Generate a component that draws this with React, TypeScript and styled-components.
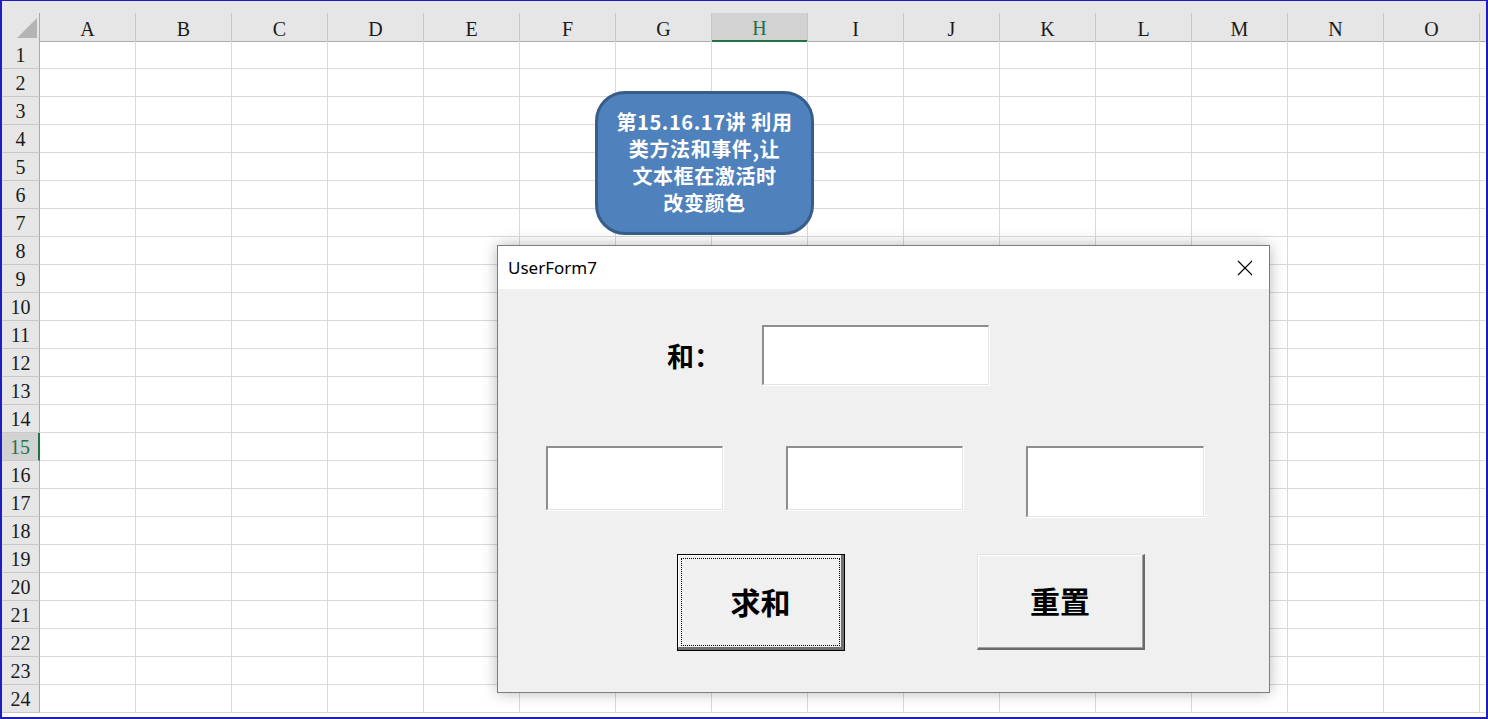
import React from 'react';
import styled, { createGlobalStyle, css } from 'styled-components';

const COLUMNS = ['A', 'B', 'C', 'D', 'E', 'F', 'G', 'H', 'I', 'J', 'K', 'L', 'M', 'N', 'O'];
const ROW_COUNT = 24;
const ACTIVE_COL = 'H';
const ACTIVE_ROW = 15;

const CALLOUT_LINES = ['第15.16.17讲 利用', '类方法和事件,让', '文本框在激活时', '改变颜色'];

const GlobalStyle = createGlobalStyle`
  html, body {
    margin: 0;
    padding: 0;
    background: #fff;
    overflow: hidden;
  }
`;

const Frame = styled.div`
  position: relative;
  width: 1488px;
  height: 719px;
  box-sizing: border-box;
  border: 2px solid #1d1dc0;
  border-top-width: 1px;
  overflow: hidden;
  background: #fff;
`;

const TopStrip = styled.div`
  height: 12px;
  background: #e6e6e6;
`;

const Sheet = styled.div`
  display: grid;
  grid-template-columns: 38px repeat(15, 96px) 1fr;
  grid-auto-rows: 28px;
  font-family: 'Liberation Serif', 'Times New Roman', serif;
  font-size: 20px;
  color: #1a1a1a;
`;

const Corner = styled.div`
  height: 29px;
  box-sizing: border-box;
  background: #e6e6e6;
  border-right: 1px solid #ababab;
  border-bottom: 1px solid #ababab;
  display: flex;
  justify-content: flex-end;
  align-items: flex-end;
  padding: 0 2px 3px 0;

  &::after {
    content: '';
    width: 20px;
    height: 20px;
    background: #b4b4b4;
    clip-path: polygon(100% 0, 100% 100%, 0 100%);
  }
`;

const ColHead = styled.div<{ $active?: boolean; $blank?: boolean }>`
  height: 29px;
  box-sizing: border-box;
  background: #e6e6e6;
  border-right: 1px solid ${(p) => (p.$blank ? '#e6e6e6' : '#c6c6c6')};
  border-bottom: 1px solid #ababab;
  display: flex;
  align-items: center;
  justify-content: center;
  padding-top: 4px;

  ${(p) =>
    p.$active &&
    css`
      background: #d2d2d2;
      color: #217346;
      border-bottom: 2px solid #217346;
    `}
`;

const RowHead = styled.div<{ $active?: boolean }>`
  box-sizing: border-box;
  background: #e6e6e6;
  border-right: 1px solid #ababab;
  border-bottom: 1px solid #c9c9c9;
  display: flex;
  align-items: center;
  justify-content: center;
  padding-top: 2px;

  ${(p) =>
    p.$active &&
    css`
      background: #d2d2d2;
      color: #217346;
      border-right: 2px solid #217346;
    `}
`;

const Cell = styled.div<{ $last?: boolean }>`
  box-sizing: border-box;
  border-right: 1px solid ${(p) => (p.$last ? 'transparent' : '#d9d9d9')};
  border-bottom: 1px solid #d9d9d9;
`;

/* rounded rectangle shape floating on the sheet */
const Callout = styled.div`
  position: absolute;
  left: 593px;
  top: 90px;
  width: 219px;
  height: 144px;
  box-sizing: border-box;
  border: 3px solid #385d8a;
  border-radius: 30px;
  background: #4f81bd;
  display: flex;
  flex-direction: column;
  align-items: center;
  justify-content: center;
  color: #fff;
  font-family: 'Noto Sans CJK SC', 'Noto Sans', sans-serif;
  font-weight: 700;
  font-size: 20px;
  padding-bottom: 2px;
`;

const CalloutLine = styled.span`
  display: block;
  height: 27px;
  line-height: 27px;
  white-space: nowrap;
  letter-spacing: 0.6px;
`;

/* VBA user form window */
const Form = styled.div`
  position: absolute;
  left: 495px;
  top: 244px;
  width: 773px;
  height: 448px;
  box-sizing: border-box;
  border: 1px solid #7d7d7d;
  background: #f0f0f0;
  box-shadow: 0 0 14px rgba(0, 0, 0, 0.28);
  display: flex;
  flex-direction: column;
`;

const TitleBar = styled.div`
  height: 43px;
  flex: none;
  background: #fff;
  display: flex;
  align-items: center;
  justify-content: space-between;
  padding: 0 16px 0 10px;
  font-family: 'Noto Sans', 'Open Sans', sans-serif;
  font-size: 17px;
  color: #000;
`;

const FormBody = styled.div`
  flex: 1;
  display: flex;
  flex-direction: column;
  padding-top: 36px;
`;

const Row = styled.div<{ $left: number; $gap: number; $top?: number }>`
  display: flex;
  align-items: flex-start;
  padding-left: ${(p) => p.$left}px;
  gap: ${(p) => p.$gap}px;
  margin-top: ${(p) => p.$top ?? 0}px;
`;

const SumRow = styled(Row)`
  align-items: center;
`;

const Label = styled.div`
  width: 95px;
  font-family: 'Noto Sans CJK SC', sans-serif;
  font-weight: 700;
  font-size: 27px;
  color: #000;
`;

const TextBox = styled.div<{ $w: number; $h: number }>`
  width: ${(p) => p.$w}px;
  height: ${(p) => p.$h}px;
  box-sizing: border-box;
  background: #fff;
  border-style: solid;
  border-width: 2px 1px 1px 2px;
  border-color: #8e8e8e #e3e3e3 #e3e3e3 #8e8e8e;
  box-shadow: 1px 1px 0 #fff;
`;

const Button = styled.div<{ $default?: boolean; $w: number; $h: number }>`
  width: ${(p) => p.$w}px;
  height: ${(p) => p.$h}px;
  box-sizing: border-box;
  background: #f0f0f0;
  display: flex;
  padding: 3px 4px 4px 3px;
  font-family: 'Noto Sans CJK SC', sans-serif;
  font-weight: 700;
  font-size: 30px;
  color: #000;

  ${(p) =>
    p.$default
      ? css`
          border: 1px solid #000;
          box-shadow: inset -3px -3px 0 #707070, inset 1px 1px 0 #fff;
        `
      : css`
          border-style: solid;
          border-width: 1px 2px 2px 1px;
          border-color: #e3e3e3 #6a6a6a #6a6a6a #e3e3e3;
          box-shadow: inset -1px -1px 0 #a0a0a0, inset 1px 1px 0 #fff;
        `}
`;

const Caption = styled.div<{ $focused?: boolean }>`
  flex: 1;
  display: flex;
  align-items: center;
  justify-content: center;
  border: 1px dotted ${(p) => (p.$focused ? '#000' : 'transparent')};
  padding-bottom: 2px;
`;

const CloseIcon = () => (
  <svg width="16" height="16" viewBox="0 0 16 16">
    <path d="M1 1 L15 15 M15 1 L1 15" stroke="#000" strokeWidth="1.1" fill="none" />
  </svg>
);

export default function App() {
  return (
    <>
      <GlobalStyle />
      <Frame>
        <TopStrip />
        <Sheet>
          <Corner />
          {COLUMNS.map((c) => (
            <ColHead key={c} $active={c === ACTIVE_COL}>
              {c}
            </ColHead>
          ))}
          <ColHead $blank />
          {Array.from({ length: ROW_COUNT }, (_, i) => i + 1).map((r) => (
            <React.Fragment key={r}>
              <RowHead $active={r === ACTIVE_ROW}>{r}</RowHead>
              {COLUMNS.map((c) => (
                <Cell key={c} />
              ))}
              <Cell $last />
            </React.Fragment>
          ))}
        </Sheet>

        <Callout>
          {CALLOUT_LINES.map((line) => (
            <CalloutLine key={line}>{line}</CalloutLine>
          ))}
        </Callout>

        <Form>
          <TitleBar>
            <span>UserForm7</span>
            <CloseIcon />
          </TitleBar>
          <FormBody>
            <SumRow $left={169} $gap={0}>
              <Label>和：</Label>
              <TextBox $w={227} $h={60} />
            </SumRow>
            <Row $left={48} $gap={63} $top={61}>
              <TextBox $w={177} $h={64} />
              <TextBox $w={177} $h={64} />
              <TextBox $w={178} $h={71} />
            </Row>
            <Row $left={179} $gap={132} $top={37}>
              <Button $default $w={168} $h={97}>
                <Caption $focused>求和</Caption>
              </Button>
              <Button $w={168} $h={96}>
                <Caption>重置</Caption>
              </Button>
            </Row>
          </FormBody>
        </Form>
      </Frame>
    </>
  );
}
